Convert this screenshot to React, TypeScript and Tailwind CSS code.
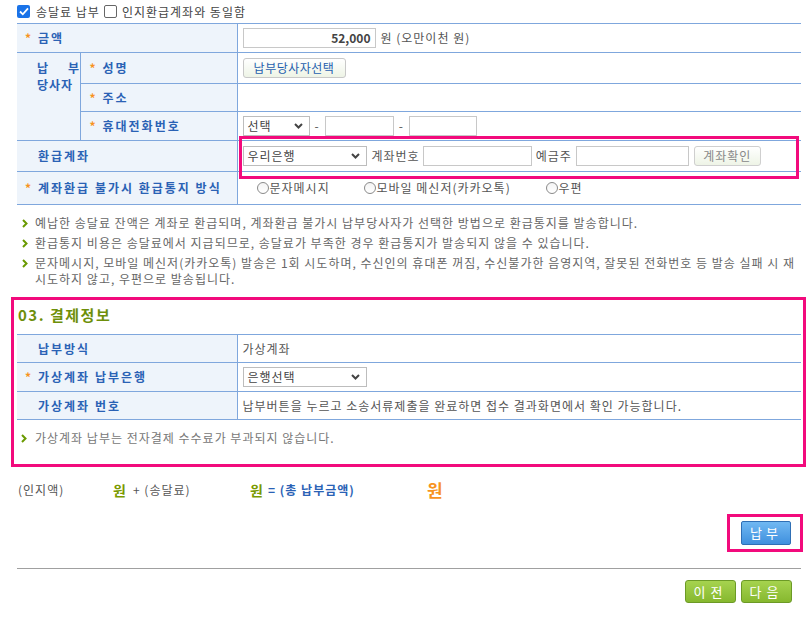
import React from "react";

const labelCls =
  "bg-[#eef4fb] text-[#2a62b5] font-bold tracking-[2px] border-b border-r border-[#7fa7dd] align-middle";
const valueCls = "border-b border-[#7fa7dd] pl-[5px] align-middle text-[#555]";

function Star({ show = true }: { show?: boolean }) {
  return (
    <span className={`inline-block w-[13px] font-bold tracking-normal text-[#f7931e] ${show ? "" : "invisible"}`}>*</span>
  );
}

function Chevron() {
  return (
    <svg width="9" height="6" viewBox="0 0 9 6">
      <path d="M1 1 L4.5 4.5 L8 1" fill="none" stroke="#444" strokeWidth="2" />
    </svg>
  );
}

function Select({ className, text }: { className: string; text: string }) {
  return (
    <div
      className={`flex items-center justify-between border border-[#bdbdbd] bg-white pl-[4px] pr-[6px] text-[#444] ${className}`}
    >
      <span>{text}</span>
      <Chevron />
    </div>
  );
}

function Box({ className }: { className: string }) {
  return <div className={`h-[20px] border border-[#c8c8c8] bg-white ${className}`} />;
}

function Radio({ text }: { text: string }) {
  return (
    <span className="flex items-center">
      <span className="mr-[1px] inline-block h-[12px] w-[12px] rounded-full border border-[#8a8a8a] bg-gradient-to-b from-[#f4f4f4] to-white" />
      <span>{text}</span>
    </span>
  );
}

function Bullet() {
  return (
    <svg width="6" height="9" viewBox="0 0 6 9" className="mt-[4px] shrink-0">
      <path d="M1 1 L4.5 4.5 L1 8" fill="none" stroke="#6a9a00" strokeWidth="2" />
    </svg>
  );
}

function Note({ children }: { children: React.ReactNode }) {
  return (
    <div className="mt-[4px] flex items-start leading-[16px]">
      <span className="flex w-[18px] shrink-0 justify-end pr-[7px]">
        <Bullet />
      </span>
      <span>{children}</span>
    </div>
  );
}

export default function App() {
  return (
    <div className="relative h-[618px] w-[811px] bg-white text-[12px] tracking-[1px] text-[#555] font-['Noto_Sans_CJK_KR','Noto_Sans',sans-serif]">
      {/* top checkboxes */}
      <div className="flex h-[23px] items-center pl-[17px] leading-[16px]">
        <span className="flex h-[13px] w-[13px] items-center justify-center rounded-[2px] bg-[#1a73e8]">
          <svg width="10" height="9" viewBox="0 0 10 9">
            <path d="M1 4.5 L3.8 7.3 L9 1.3" fill="none" stroke="#fff" strokeWidth="1.8" />
          </svg>
        </span>
        <span className="ml-[6px] text-[#444]">송달료 납부</span>
        <span className="ml-[4px] inline-block h-[13px] w-[13px] rounded-[2px] border border-[#666] bg-white" />
        <span className="ml-[5px] text-[#444]">인지환급계좌와 동일함</span>
      </div>

      {/* refund info table */}
      <div className="relative ml-[17px] w-[784px]">
        <table className="w-full table-fixed border-collapse border-t border-[#7fa7dd] leading-[16px]">
          <colgroup>
            <col className="w-[63px]" />
            <col className="w-[157px]" />
            <col />
          </colgroup>
          <tbody>
            <tr className="h-[29px]">
              <td colSpan={2} className={`${labelCls} pl-[8px]`}>
                <Star />
                금액
              </td>
              <td className={valueCls}>
                <div className="flex items-center">
                  <div className="flex h-[20px] w-[133px] items-center justify-end border border-[#c8c8c8] pr-[4px] font-bold tracking-normal text-[#444]">
                    52,000
                  </div>
                  <span className="ml-[5px]">원 (오만이천 원)</span>
                </div>
              </td>
            </tr>
            <tr className="h-[31px]">
              <td rowSpan={3} className={`${labelCls} !align-top pl-[20px] pt-[6px] leading-[17px] !tracking-[1px]`}>
                <div className="flex w-[43px] justify-between">
                  <span>납</span>
                  <span>부</span>
                </div>
                <div>당사자</div>
              </td>
              <td className={`${labelCls} pl-[9px]`}>
                <Star />
                성명
              </td>
              <td className={valueCls}>
                <button className="flex h-[20px] w-[103px] items-center justify-center rounded-[3px] border border-[#c8c8c8] bg-gradient-to-b from-white to-[#eef4e6] tracking-[0.5px] text-[#1f5fae]">
                  납부당사자선택
                </button>
              </td>
            </tr>
            <tr className="h-[28px]">
              <td className={`${labelCls} pl-[9px]`}>
                <Star />
                주소
              </td>
              <td className={valueCls} />
            </tr>
            <tr className="h-[29px]">
              <td className={`${labelCls} pl-[9px]`}>
                <Star />
                휴대전화번호
              </td>
              <td className={valueCls}>
                <div className="flex items-center">
                  <Select className="h-[20px] w-[67px]" text="선택" />
                  <span className="mx-[5px]">-</span>
                  <Box className="w-[69px]" />
                  <span className="mx-[5px]">-</span>
                  <Box className="w-[68px]" />
                </div>
              </td>
            </tr>
            <tr className="h-[31px]">
              <td colSpan={2} className={`${labelCls} pl-[8px]`}>
                <Star show={false} />
                환급계좌
              </td>
              <td className={valueCls}>
                <div className="flex items-center">
                  <Select className="h-[20px] w-[124px]" text="우리은행" />
                  <span className="ml-[5px]">계좌번호</span>
                  <Box className="ml-[3px] w-[109px]" />
                  <span className="ml-[4px]">예금주</span>
                  <Box className="ml-[4px] w-[113px]" />
                  <button className="ml-[5px] flex h-[20px] w-[67px] items-center justify-center rounded-[3px] border border-[#cfcfcf] bg-gradient-to-b from-white to-[#eef4e6] text-[#888]">
                    계좌확인
                  </button>
                </div>
              </td>
            </tr>
            <tr className="h-[33px]">
              <td colSpan={2} className={`${labelCls} pl-[8px]`}>
                <Star />
                계좌환급 불가시 환급통지 방식
              </td>
              <td className={`${valueCls} pl-[19px]`}>
                <div className="flex items-center">
                  <span className="w-[107px]">
                    <Radio text="문자메시지" />
                  </span>
                  <span className="w-[182px]">
                    <Radio text="모바일 메신저(카카오톡)" />
                  </span>
                  <Radio text="우편" />
                </div>
              </td>
            </tr>
          </tbody>
        </table>
        {/* highlight overlay on refund account row */}
        <div className="pointer-events-none absolute left-[222px] top-[113px] h-[43px] w-[560px] border-[3px] border-[#f20a7c]" />
      </div>

      {/* notes */}
      <div className="ml-[17px] mt-[10px] w-[794px] text-[#666]">
        <Note>예납한 송달료 잔액은 계좌로 환급되며, 계좌환급 불가시 납부당사자가 선택한 방법으로 환급통지를 발송합니다.</Note>
        <Note>환급통지 비용은 송달료에서 지급되므로, 송달료가 부족한 경우 환급통지가 발송되지 않을 수 있습니다.</Note>
        <Note>
          <span className="whitespace-nowrap">
            문자메시지, 모바일 메신저(카카오톡) 발송은 1회 시도하며, 수신인의 휴대폰 꺼짐, 수신불가한 음영지역, 잘못된 전화번호 등 발송 실패 시 재
          </span>
          <br />
          시도하지 않고, 우편으로 발송됩니다.
        </Note>
      </div>

      {/* 03. payment info */}
      <div className="ml-[11px] mt-[10px] w-[795px] border-[3px] border-[#f20a7c] pb-[17px]">
        <div className="flex h-[34px] items-center pb-[4px] pl-[4px] text-[15px] font-bold tracking-[1.5px] text-[#6e8f0a]">
          03. 결제정보
        </div>
        <table className="ml-[3px] w-[784px] table-fixed border-collapse border-t border-[#7fa7dd] leading-[16px]">
          <colgroup>
            <col className="w-[220px]" />
            <col />
          </colgroup>
          <tbody>
            <tr className="h-[28px]">
              <td className={`${labelCls} pl-[8px]`}>
                <Star show={false} />
                납부방식
              </td>
              <td className={valueCls}>가상계좌</td>
            </tr>
            <tr className="h-[29px]">
              <td className={`${labelCls} pl-[8px]`}>
                <Star />
                가상계좌 납부은행
              </td>
              <td className={valueCls}>
                <Select className="h-[20px] w-[124px]" text="은행선택" />
              </td>
            </tr>
            <tr className="h-[28px]">
              <td className={`${labelCls} pl-[8px]`}>
                <Star show={false} />
                가상계좌 번호
              </td>
              <td className={valueCls}>납부버튼을 누르고 소송서류제출을 완료하면 접수 결과화면에서 확인 가능합니다.</td>
            </tr>
          </tbody>
        </table>
        <div className="mt-[9px] flex items-start leading-[18px] text-[#777]">
          <span className="flex w-[21px] justify-end pr-[8px]">
            <svg width="6" height="9" viewBox="0 0 6 9" className="mt-[5px]">
              <path d="M1 1 L4.5 4.5 L1 8" fill="none" stroke="#6a9a00" strokeWidth="2" />
            </svg>
          </span>
          가상계좌 납부는 전자결제 수수료가 부과되지 않습니다.
        </div>
      </div>

      {/* total summary */}
      <div className="mt-[14px] flex h-[18px] items-center pl-[18px] leading-[18px]">
        <span className="w-[95px]">(인지액)</span>
        <span className="w-[20px] text-[14px] font-bold text-[#7a9a00]">원</span>
        <span className="w-[117px]">+ (송달료)</span>
        <span className="w-[18px] text-[14px] font-bold text-[#7a9a00]">원</span>
        <span className="w-[159px] font-bold text-[#2a62b5]">= (총 납부금액)</span>
        <span className="text-[17px] font-bold text-[#f7931e]">원</span>
      </div>

      {/* pay button */}
      <div className="mt-[15px] flex justify-end pr-[8px]">
        <div className="border-[3px] border-[#f20a7c] pb-[4px] pl-[11px] pr-[9px] pt-[4px]">
          <button className="flex h-[24px] w-[50px] items-center justify-center rounded-[2px] border border-[#2f6fb5] bg-gradient-to-b from-[#70b8f2] to-[#3f90de] text-[13px] tracking-[4px] text-white">
            납부
          </button>
        </div>
      </div>

      <div className="ml-[17px] mt-[16px] h-px w-[784px] bg-[#a0a0a0]" />

      <div className="mt-[11px] flex justify-end gap-[5px] pr-[19px]">
        <button className="flex h-[23px] w-[51px] items-center justify-center rounded-[3px] border border-[#6c9a26] bg-gradient-to-b from-[#a6d34f] to-[#86b82e] text-[13px] tracking-[5px] text-white">
          이전
        </button>
        <button className="flex h-[23px] w-[51px] items-center justify-center rounded-[3px] border border-[#6c9a26] bg-gradient-to-b from-[#a6d34f] to-[#86b82e] text-[13px] tracking-[5px] text-white">
          다음
        </button>
      </div>
    </div>
  );
}
